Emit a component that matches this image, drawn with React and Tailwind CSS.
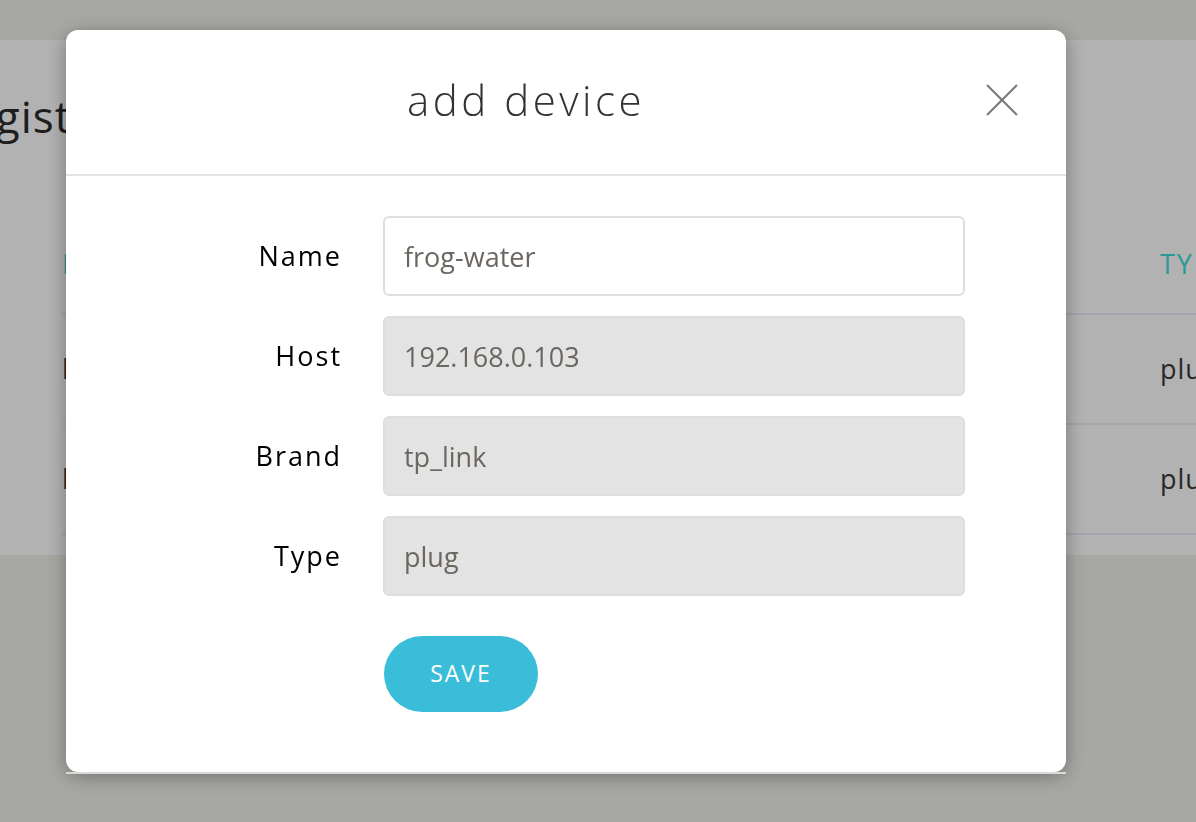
const fields = [
  { label: "Name", value: "frog-water", disabled: false },
  { label: "Host", value: "192.168.0.103", disabled: true },
  { label: "Brand", value: "tp_link", disabled: true },
  { label: "Type", value: "plug", disabled: true },
];

const devices = [
  { name: "living-lamp", host: "192.168.0.101", brand: "tp_link", type: "plug" },
  { name: "heater", host: "192.168.0.102", brand: "tp_link", type: "plug" },
];

function App() {
  return (
    <div className="relative min-h-screen w-full overflow-hidden bg-[#f0f0ea] font-['Open_Sans',sans-serif] text-[#2b2b2b]">
      {/* PAGE BEHIND */}
      <div className="pt-[40px]">
        <div className="h-[515px] bg-white overflow-hidden">
          <div className="h-[175px] flex items-center pb-[24px]">
            <h1 className="ml-[-58px] text-[44px] font-normal tracking-[1px] whitespace-nowrap">Registered devices</h1>
          </div>
          <div className="w-[1300px] ml-[62px]">
            <div className="h-[100px] grid grid-cols-[1098px_1fr] items-center border-b-2 border-[#ececf8] text-[#3cdcd9] text-[27px] tracking-[2px]">
              <span>NAME</span>
              <span>TYPE</span>
            </div>
            {devices.map((d) => (
              <div
                key={d.name}
                className="h-[110px] grid grid-cols-[1098px_1fr] items-center border-b-2 border-[#ececf8] text-[27px] text-[#3a3a3a] tracking-[1px]"
              >
                <span>{d.name}</span>
                <span>{d.type}</span>
              </div>
            ))}
          </div>
        </div>
      </div>

      {/* OVERLAY */}
      <div className="fixed inset-0 bg-black/30">
        <div className="absolute left-[66px] top-[30px] w-[1000px] flex flex-col">
          <div className="bg-white rounded-xl shadow-[0_4px_20px_rgba(0,0,0,0.35)]">
            <div className="h-[146px] flex items-center border-b-2 border-[#e2e2e2]">
              <h2 className="flex-1 text-center pb-[6px] text-[42px] font-light text-[#333] tracking-[3.5px]">add device</h2>
              <button className="w-[32px] h-[32px] mr-[48px] mb-[4px] text-[#7a7a7a]">
                <svg width="32" height="32" viewBox="0 0 32 32" fill="none" stroke="currentColor" strokeWidth="2.2">
                  <line x1="1" y1="1" x2="31" y2="31" />
                  <line x1="31" y1="1" x2="1" y2="31" />
                </svg>
              </button>
            </div>

            <div className="pt-[40px] pb-[60px] flex flex-col gap-[20px]">
              {fields.map((f) => (
                <div key={f.label} className="flex items-center">
                  <label className="w-[276px] mr-[-2px] text-right text-[27px] tracking-[2px] text-black">{f.label}</label>
                  <input
                    readOnly
                    disabled={f.disabled}
                    value={f.value}
                    className={`ml-[43px] w-[582px] h-[80px] rounded-md border-2 border-[#dedede] px-[19px] text-[27px] text-[#6b6660] outline-none ${
                      f.disabled ? "bg-[#e3e3e3]" : "bg-white"
                    }`}
                  />
                </div>
              ))}
              <div className="pl-[318px] pt-[20px]">
                <button className="w-[154px] h-[76px] rounded-full bg-[#3abdd9] text-white text-[23px] font-normal tracking-[2px] pb-[2px]">
                  SAVE
                </button>
              </div>
            </div>
          </div>
          <div className="h-[2px] bg-[#d9d9d9]"></div>
        </div>
      </div>
    </div>
  );
}

export default App;
